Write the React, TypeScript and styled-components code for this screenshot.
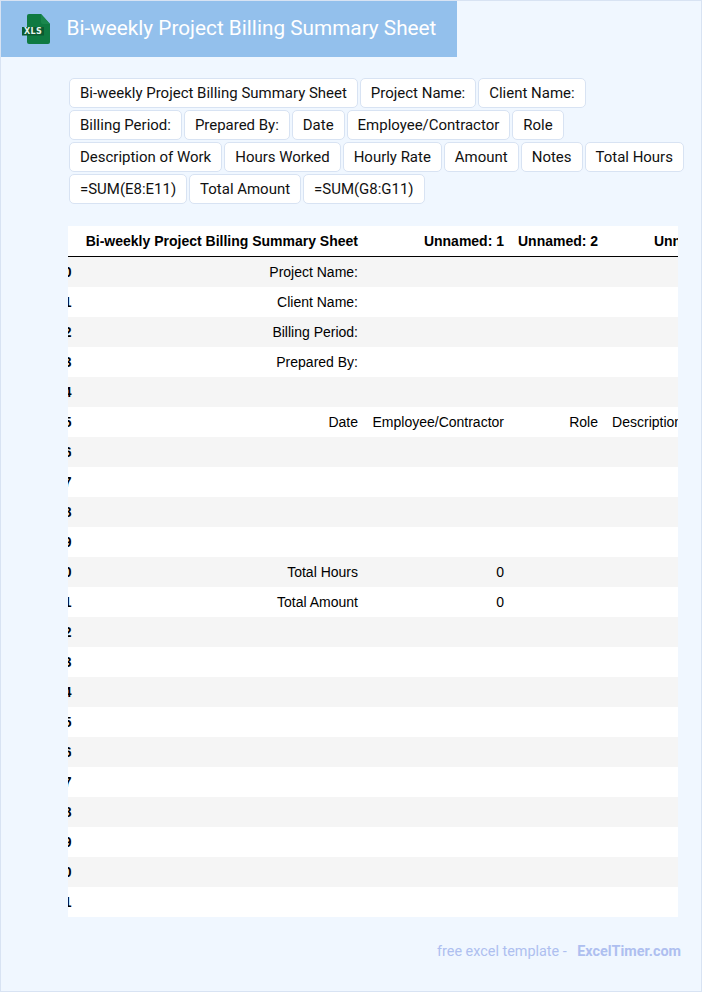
import React from "react";
import styled, { createGlobalStyle } from "styled-components";

const Global = createGlobalStyle`
  html, body { margin: 0; padding: 0; background: #f0f7ff; }
  * { box-sizing: border-box; }
`;

const Page = styled.div`
  width: 702px;
  height: 992px;
  overflow: hidden;
  background: #f0f7ff;
  border: 1px solid #d8e3f3;
  font-family: Roboto, "Liberation Sans", sans-serif;
`;

const Banner = styled.header`
  width: 456px;
  height: 56px;
  background: #93c0ec;
  display: flex;
  align-items: center;
  padding-left: 20px;
  gap: 15.5px;
`;

const BannerTitle = styled.h1`
  margin: 0;
  padding-bottom: 3px;
  font-size: 20.75px;
  font-weight: 400;
  color: #fff;
  white-space: nowrap;
`;

const Chips = styled.div`
  display: flex;
  flex-wrap: wrap;
  gap: 2px;
  margin: 21px 0 0 68px;
  width: 630px;
`;

const Chip = styled.span`
  height: 30px;
  padding: 0 10px;
  display: inline-flex;
  align-items: center;
  font-size: 14.98px;
  color: #111;
  background: #fff;
  border: 1px solid #d8e3f3;
  border-radius: 5px;
  white-space: nowrap;
`;

const TableClip = styled.div`
  width: 610px;
  margin: 22px 0 0 67px;
  overflow: hidden;
  background: #fff;
`;

const Table = styled.table`
  border-collapse: separate;
  border-spacing: 0;
  table-layout: fixed;
  width: 800px;
  font-family: "Liberation Sans", Arial, sans-serif;
  font-size: 14px;
  color: #000;
`;

const HeadRow = styled.tr`
  height: 31px;
`;

const BodyRow = styled.tr<{ $shaded: boolean }>`
  height: 30px;
  background: ${(p) => (p.$shaded ? "#f5f5f5" : "#fff")};
`;

const HeadCell = styled.th`
  padding: 0 7px;
  text-align: right;
  font-weight: 700;
  white-space: nowrap;
  border-bottom: 1px solid #000;
`;

const Cell = styled.td`
  padding: 0 7px;
  text-align: right;
  white-space: nowrap;
`;

const IndexCell = styled.th`
  padding: 0;
  text-align: right;
  font-weight: 700;
  white-space: nowrap;
  border-bottom: 1px solid #000;
`;

const IndexBody = styled(IndexCell)`
  border-bottom: 0;
`;

const IndexShift = styled.span`
  display: inline-block;
  width: 3.5px;
  direction: rtl;
`;

const Footer = styled.footer`
  display: flex;
  justify-content: flex-end;
  gap: 10.5px;
  margin: 26px 20px 0 0;
  font-size: 14.4px;
  color: #aebff0;
`;

const FooterBrand = styled.strong`
  font-weight: 700;
`;

const FileIcon = () => (
  <svg width="30" height="32" viewBox="0 0 30 32" aria-hidden="true">
    <path d="M8 1h12l9 10v18a2 2 0 0 1-2 2H8a2 2 0 0 1-2-2V3a2 2 0 0 1 2-2z" fill="#0f7a42" />
    <path d="M20 1l9 10h-7a2 2 0 0 1-2-2z" fill="#1a874d" />
    <rect x="1" y="14" width="22" height="8.5" fill="#0b5a30" />
    <text x="12" y="21.2" textAnchor="middle" fontFamily="'DejaVu Sans', sans-serif" fontSize="8" fontWeight="700" letterSpacing="0.3" fill="#e8f5ee">XLS</text>
  </svg>
);

const chips = [
  "Bi-weekly Project Billing Summary Sheet", "Project Name:", "Client Name:",
  "Billing Period:", "Prepared By:", "Date", "Employee/Contractor", "Role",
  "Description of Work", "Hours Worked", "Hourly Rate", "Amount", "Notes", "Total Hours",
  "=SUM(E8:E11)", "Total Amount", "=SUM(G8:G11)",
];

const rows: [string, string, string, string][] = [
  ["Project Name:", "", "", ""],
  ["Client Name:", "", "", ""],
  ["Billing Period:", "", "", ""],
  ["Prepared By:", "", "", ""],
  ["", "", "", ""],
  ["Date", "Employee/Contractor", "Role", "Description of Work"],
  ["", "", "", ""], ["", "", "", ""], ["", "", "", ""], ["", "", "", ""],
  ["Total Hours", "0", "", ""],
  ["Total Amount", "0", "", ""],
  ...Array.from({ length: 10 }, () => ["", "", "", ""] as [string, string, string, string]),
];

export default function App() {
  return (
    <Page>
      <Global />
      <Banner>
        <FileIcon />
        <BannerTitle>Bi-weekly Project Billing Summary Sheet</BannerTitle>
      </Banner>
      <Chips>
        {chips.map((c) => <Chip key={c}>{c}</Chip>)}
      </Chips>
      <TableClip>
        <Table>
          <colgroup>
            <col style={{ width: 3 }} />
            <col style={{ width: 294 }} />
            <col style={{ width: 146 }} />
            <col style={{ width: 94 }} />
            <col style={{ width: 136 }} />
            <col style={{ width: 127 }} />
          </colgroup>
          <thead>
            <HeadRow>
              <IndexCell />
              <HeadCell>Bi-weekly Project Billing Summary Sheet</HeadCell>
              <HeadCell>Unnamed: 1</HeadCell>
              <HeadCell>Unnamed: 2</HeadCell>
              <HeadCell>Unnamed: 3</HeadCell>
              <HeadCell />
            </HeadRow>
          </thead>
          <tbody>
            {rows.map((r, i) => (
              <BodyRow key={i} $shaded={i % 2 === 0}>
                <IndexBody><IndexShift>{i}</IndexShift></IndexBody>
                {r.map((v, j) => <Cell key={j}>{v}</Cell>)}
                <Cell />
              </BodyRow>
            ))}
          </tbody>
        </Table>
      </TableClip>
      <Footer>
        <span>free excel template -</span>
        <FooterBrand>ExcelTimer.com</FooterBrand>
      </Footer>
    </Page>
  );
}
